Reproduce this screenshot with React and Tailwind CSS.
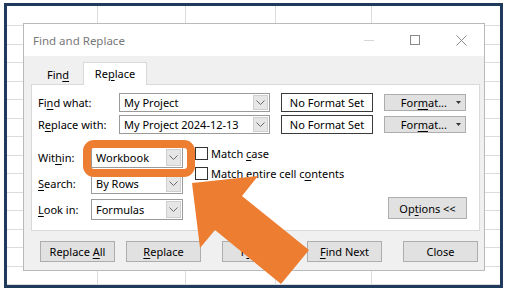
import React from "react";
import clsx from "clsx";

// access-key underline
function Key({ children }) {
  return <span className="underline decoration-1 underline-offset-[2px]">{children}</span>;
}

function Chevron() {
  return (
    <svg width="9" height="5" viewBox="0 0 9 5" className="block">
      <path d="M0.5 0.5 L4.5 4.5 L8.5 0.5" fill="none" stroke="#6b6b6b" strokeWidth="1" />
    </svg>
  );
}

function Combo({ value, className }) {
  return (
    <div className={clsx("flex border border-[#9a9a9a] bg-white", className)}>
      <div className="flex flex-1 items-center pl-[4px] text-[11px] leading-none text-black">{value}</div>
      <div className="m-px flex w-[15px] items-center justify-center border border-[#cfcfcf] bg-[#e6e6e6]">
        <Chevron />
      </div>
    </div>
  );
}

function Btn({ children, className }) {
  return (
    <button
      type="button"
      className={clsx(
        "flex h-[21px] w-[75px] items-center justify-center border border-[#adadad] bg-[#e1e1e1] text-[11px] leading-none text-black",
        className
      )}
    >
      {children}
    </button>
  );
}

function FormatBtn() {
  return (
    <button
      type="button"
      className="flex h-[17px] w-[82px] items-center justify-end gap-[9px] border border-[#adadad] bg-[#e1e1e1] pr-[4px] text-[11px] leading-none text-black"
    >
      <span>
        For<Key>m</Key>at...
      </span>
      <svg width="5" height="3" viewBox="0 0 5 3" className="block">
        <path d="M0 0 H5 L2.5 3 Z" fill="#333" />
      </svg>
    </button>
  );
}

function NoFormat() {
  return (
    <div className="flex h-[19px] w-[92px] items-center justify-center border border-[#3a3a3a] bg-white text-[11px] leading-none text-black">
      No Format Set
    </div>
  );
}

function Check({ children }) {
  return (
    <div className="flex h-[13px] items-center gap-[3px]">
      <div className="h-[13px] w-[13px] border border-[#333] bg-white" />
      <span className="text-[11px] leading-none text-black">{children}</span>
    </div>
  );
}

const gridRows = Array.from({ length: 15 }, (_, i) => 19 + i * 18.5);
const gridCols = [90, 178, 268, 364];

export default function App() {
  return (
    <div className="relative h-[296px] w-[507px] overflow-hidden bg-white pl-[4px] pt-[3px] font-['Noto_Sans',sans-serif]">
      <div className="relative h-[285px] w-[499px] overflow-hidden border-[3px] border-[#1f3a5a] bg-white">
        {/* spreadsheet grid behind the dialog */}
        <svg className="absolute left-0 top-0" width="493" height="279">
          {gridRows.map((y) => (
            <line key={y} x1="0" x2="493" y1={Math.round(y) + 0.5} y2={Math.round(y) + 0.5} stroke="#dcdcdc" />
          ))}
          {gridCols.map((x) => (
            <line key={x} x1={x + 0.5} x2={x + 0.5} y1="0" y2="279" stroke="#dcdcdc" />
          ))}
        </svg>

        <div className="relative ml-[16px] mt-[17px] flex h-[248px] w-[462px] flex-col border border-[#b9b9b9] bg-[#f0f0f0]">
          {/* title bar */}
          <div className="flex h-[32px] shrink-0 items-center bg-white pl-[9px]">
            <span className="pt-px text-[11.5px] text-[#787878]">Find and Replace</span>
            <div className="ml-auto flex h-full">
              <div className="flex w-[46px] items-center justify-center">
                <div className="h-px w-[10px] bg-[#d6d6d6]" />
              </div>
              <div className="flex w-[46px] items-center justify-center">
                <div className="h-[10px] w-[10px] border border-[#8a8a8a]" />
              </div>
              <div className="flex w-[46px] items-center justify-center">
                <svg width="11" height="11" viewBox="0 0 11 11">
                  <path d="M0.5 0.5 L10.5 10.5 M10.5 0.5 L0.5 10.5" stroke="#8a8a8a" strokeWidth="1" />
                </svg>
              </div>
            </div>
          </div>

          {/* body */}
          <div className="flex flex-1 flex-col pl-[7px] pr-[4px] pt-[6px]">
            <div className="flex h-[22px] items-end pl-[2px]">
              <div className="flex h-[19px] w-[50px] items-center justify-center text-[11px] leading-none text-black">
                <span>
                  Fin<Key>d</Key>
                </span>
              </div>
              <div className="relative z-10 -mb-px flex h-[23px] w-[64px] items-center justify-center border border-b-0 border-[#d9d9d9] bg-white pb-px text-[11px] leading-none text-black">
                <span>
                  Re<Key>p</Key>lace
                </span>
              </div>
            </div>

            <div className="flex h-[147px] w-[449px] flex-col border border-[#d9d9d9] bg-white pl-[6px] pt-[8px]">
              <div className="flex h-[19px] items-center">
                <span className="w-[81px] text-[11px] leading-none text-black">
                  Fi<Key>n</Key>d what:
                </span>
                <Combo value="My Project" className="h-[19px] w-[151px]" />
                <div className="ml-[11px]">
                  <NoFormat />
                </div>
                <div className="ml-[11px]">
                  <FormatBtn />
                </div>
              </div>
              <div className="mt-[3px] flex h-[19px] items-center">
                <span className="w-[81px] text-[11px] leading-none text-black">
                  R<Key>e</Key>place with:
                </span>
                <Combo value="My Project 2024-12-13" className="h-[19px] w-[151px]" />
                <div className="ml-[11px]">
                  <NoFormat />
                </div>
                <div className="ml-[11px]">
                  <FormatBtn />
                </div>
              </div>

              <div className="mt-[13px] flex">
                <div className="flex flex-col gap-[5px]">
                  {[
                    [<>Wit<Key>h</Key>in:</>, "Workbook"],
                    [<><Key>S</Key>earch:</>, "By Rows"],
                    [<><Key>L</Key>ook in:</>, "Formulas"],
                  ].map(([label, value], i) => (
                    <div key={i} className="flex h-[21px] items-center">
                      <span className="w-[53px] text-[11px] leading-none text-black">{label}</span>
                      <Combo value={value} className="h-[21px] w-[92px]" />
                    </div>
                  ))}
                </div>
                <div className="ml-[12px] flex flex-col gap-[7px]">
                  <Check>
                    Match <Key>c</Key>ase
                  </Check>
                  <Check>
                    Match entire cell c<Key>o</Key>ntents
                  </Check>
                </div>
                <Btn className="mb-px ml-auto mr-[12px] h-[22px] w-[79px] self-end">
                  <span>
                    Op<Key>t</Key>ions &lt;&lt;
                  </span>
                </Btn>
              </div>
            </div>

            <div className="ml-[9px] mt-[10px] flex">
              <Btn>
                <span>
                  Replace <Key>A</Key>ll
                </span>
              </Btn>
              <Btn className="ml-[11px]">
                <span>
                  <Key>R</Key>eplace
                </span>
              </Btn>
              <Btn className="ml-[21px]">
                <span>
                  F<Key>i</Key>nd All
                </span>
              </Btn>
              <Btn className="ml-[10px] border-[#0078d7]">
                <span>
                  <Key>F</Key>ind Next
                </span>
              </Btn>
              <Btn className="ml-[21px]">Close</Btn>
            </div>
          </div>
        </div>
      </div>

      {/* callout: highlight box and arrow */}
      <svg className="pointer-events-none absolute left-0 top-0 z-20" width="507" height="296">
        <rect x="87" y="144" width="104" height="29" rx="7" fill="none" stroke="#ed7d31" strokeWidth="8" />
        <polygon points="192,183 258,176 242,196 309,250 281,284 215,230 200,248" fill="#ed7d31" />
      </svg>
    </div>
  );
}
